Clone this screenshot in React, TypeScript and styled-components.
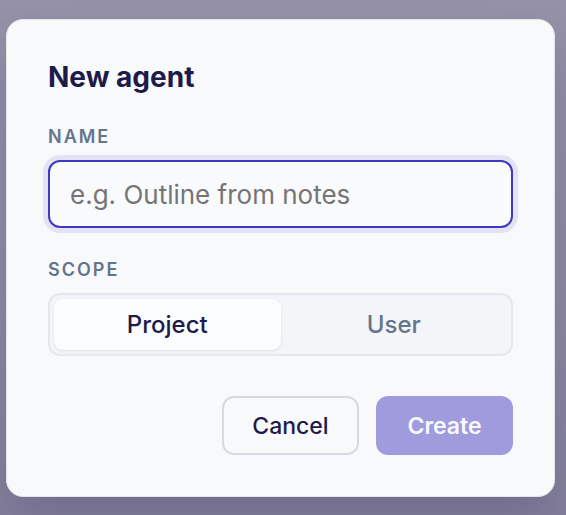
import React, { useState } from 'react'
import styled, { createGlobalStyle } from 'styled-components'

type Scope = 'project' | 'user'

const GlobalStyle = createGlobalStyle`
  html, body {
    margin: 0;
    height: 100%;
  }
  body {
    background: linear-gradient(180deg, #9693a9 0%, #8f8ca3 60%, #85829c 100%);
    font-family: Inter, "Noto Sans", "Liberation Sans", sans-serif;
    -webkit-font-smoothing: antialiased;
  }
  * {
    box-sizing: border-box;
  }
`

export default function App() {
  const [scope, setScope] = useState<Scope>('project')
  const [name, setName] = useState('')

  return (
    <>
      <GlobalStyle />
      <Page>
        <Card>
          <Title>New agent</Title>
          <Field>
            <Label>Name</Label>
            <Input
              placeholder="e.g. Outline from notes"
              value={name}
              onChange={(e) => setName(e.target.value)}
            />
          </Field>
          <Field>
            <Label>Scope</Label>
            <Segmented>
              <Segment $active={scope === 'project'} onClick={() => setScope('project')}>
                Project
              </Segment>
              <Segment $active={scope === 'user'} onClick={() => setScope('user')}>
                User
              </Segment>
            </Segmented>
          </Field>
          <Actions>
            <CancelButton>Cancel</CancelButton>
            <CreateButton disabled={!name}>Create</CreateButton>
          </Actions>
        </Card>
      </Page>
    </>
  )
}

const Page = styled.div`
  padding: 19px 11px 0 6px;
`

const Card = styled.div`
  width: 549px;
  height: 478px;
  background: #f8f9fb;
  border: 1px solid #e3e5ec;
  border-radius: 17px;
  padding: 41px;
  display: flex;
  flex-direction: column;
  box-shadow: 0 24px 50px rgba(40, 34, 80, 0.22);
`

const Title = styled.h2`
  margin: 0 0 32px;
  font-size: 28px;
  line-height: 33px;
  font-weight: 700;
  color: #1e1b4b;
`

const Field = styled.div`
  display: flex;
  flex-direction: column;
  gap: 13px;
  & + & {
    margin-top: 31px;
  }
`

const Label = styled.div`
  font-size: 18px;
  line-height: 21px;
  font-weight: 600;
  letter-spacing: 2px;
  text-transform: uppercase;
  color: #64748b;
`

const Input = styled.input`
  all: unset;
  box-sizing: border-box;
  height: 68px;
  padding: 0 20px;
  border: 2px solid #4038c4;
  border-radius: 12px;
  background: #f9fafc;
  box-shadow: 0 0 0 5px #e4e3f5;
  font-family: inherit;
  font-size: 26px;
  color: #1e1b4b;
  &::placeholder {
    color: #757575;
  }
`

const Segmented = styled.div`
  display: grid;
  grid-template-columns: 1fr 1fr;
  height: 63px;
  padding: 4px;
  border: 2px solid #e3e7ee;
  border-radius: 12px;
  background: #f3f5f8;
`

const Segment = styled.button<{ $active: boolean }>`
  all: unset;
  box-sizing: border-box;
  display: flex;
  justify-content: center;
  align-items: center;
  border-radius: 9px;
  font-family: inherit;
  font-size: 24px;
  font-weight: 500;
  cursor: pointer;
  color: ${(p) => (p.$active ? '#1e1b4b' : '#64748b')};
  background: ${(p) => (p.$active ? '#fbfcfd' : 'transparent')};
  box-shadow: ${(p) => (p.$active ? '0 1px 3px rgba(30, 27, 75, 0.1)' : 'none')};
`

const Actions = styled.div`
  display: flex;
  justify-content: flex-end;
  gap: 17px;
  margin-top: auto;
`

const BaseButton = styled.button`
  all: unset;
  box-sizing: border-box;
  width: 137px;
  height: 59px;
  display: flex;
  justify-content: center;
  align-items: center;
  border-radius: 12px;
  font-family: inherit;
  font-size: 23px;
  font-weight: 500;
  cursor: pointer;
`

const CancelButton = styled(BaseButton)`
  border: 2px solid #d6dae3;
  background: #f8f9fb;
  color: #1e1b4b;
`

const CreateButton = styled(BaseButton)`
  background: #4f46e5;
  color: #ffffff;
  font-weight: 600;
  &:disabled {
    background: #9f9bdd;
    color: #f8f8ff;
    cursor: default;
  }
`
